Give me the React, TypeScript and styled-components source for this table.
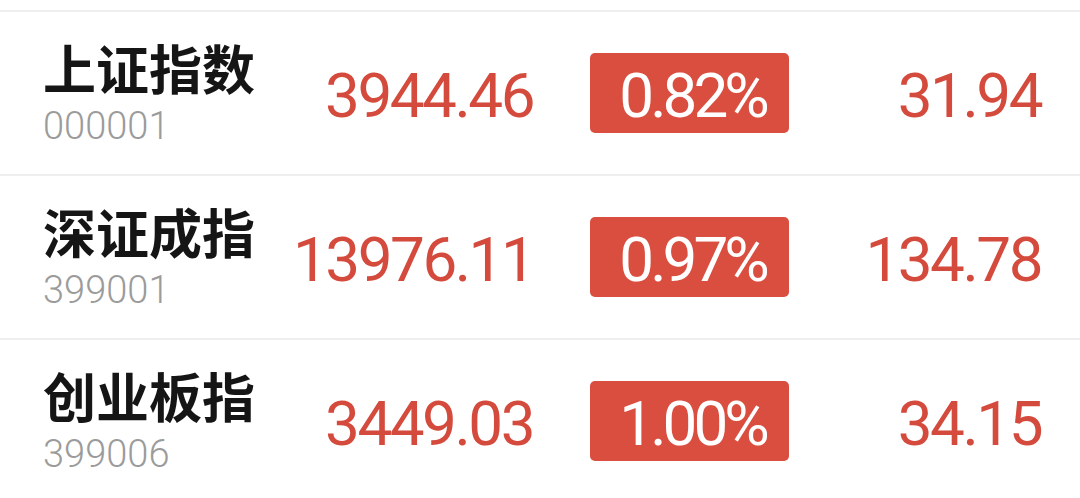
import styled, { createGlobalStyle } from "styled-components";

const GlobalStyle = createGlobalStyle`
  html, body {
    margin: 0;
    padding: 0;
    background: #ffffff;
  }
  body {
    font-family: Roboto, "Noto Sans CJK SC", sans-serif;
  }
`;

const List = styled.ul`
  list-style: none;
  margin: 0;
  padding: 10px 0 0;
  width: 1080px;
`;

const Row = styled.li`
  display: grid;
  grid-template-columns: 250px 240px 199px 1fr;
  align-items: center;
  height: 162px;
  padding: 0 39px 0 43px;
  border-top: 2px solid #eeeeee;
`;

const NameBox = styled.div`
  display: flex;
  flex-direction: column;
  gap: 13px;
`;

const Name = styled.div`
  font-family: "Noto Sans CJK SC", sans-serif;
  font-weight: 700;
  font-size: 53px;
  line-height: 53px;
  color: #151515;
  white-space: nowrap;
`;

const Code = styled.div`
  font-family: Roboto, sans-serif;
  font-weight: 300;
  font-size: 38px;
  line-height: 38px;
  color: #9b9b9b;
`;

const Num = styled.div`
  font-family: Roboto, sans-serif;
  font-weight: 400;
  font-size: 62px;
  line-height: 62px;
  letter-spacing: -2.5px;
  color: #d44b3d;
  text-align: right;
  padding-top: 5px;
`;

const Price = styled(Num)``;

const Change = styled(Num)``;

const Badge = styled.div`
  margin-left: 57px;
  width: 199px;
  height: 80px;
  box-sizing: border-box;
  border-radius: 5px;
  background: #da4e40;
  color: #ffffff;
  display: flex;
  align-items: center;
  justify-content: center;
  font-family: Roboto, sans-serif;
  font-weight: 400;
  font-size: 62px;
  line-height: 62px;
  letter-spacing: -4px;
  padding: 5px 0 0 6px;
`;

const data = [
  { name: "上证指数", code: "000001", price: "3944.46", pct: "0.82%", change: "31.94" },
  { name: "深证成指", code: "399001", price: "13976.11", pct: "0.97%", change: "134.78" },
  { name: "创业板指", code: "399006", price: "3449.03", pct: "1.00%", change: "34.15" },
];

export default function App() {
  return (
    <>
      <GlobalStyle />
      <List>
        {data.map((item) => (
          <Row key={item.code}>
            <NameBox>
              <Name>{item.name}</Name>
              <Code>{item.code}</Code>
            </NameBox>
            <Price>{item.price}</Price>
            <Badge>{item.pct}</Badge>
            <Change>{item.change}</Change>
          </Row>
        ))}
      </List>
    </>
  );
}
